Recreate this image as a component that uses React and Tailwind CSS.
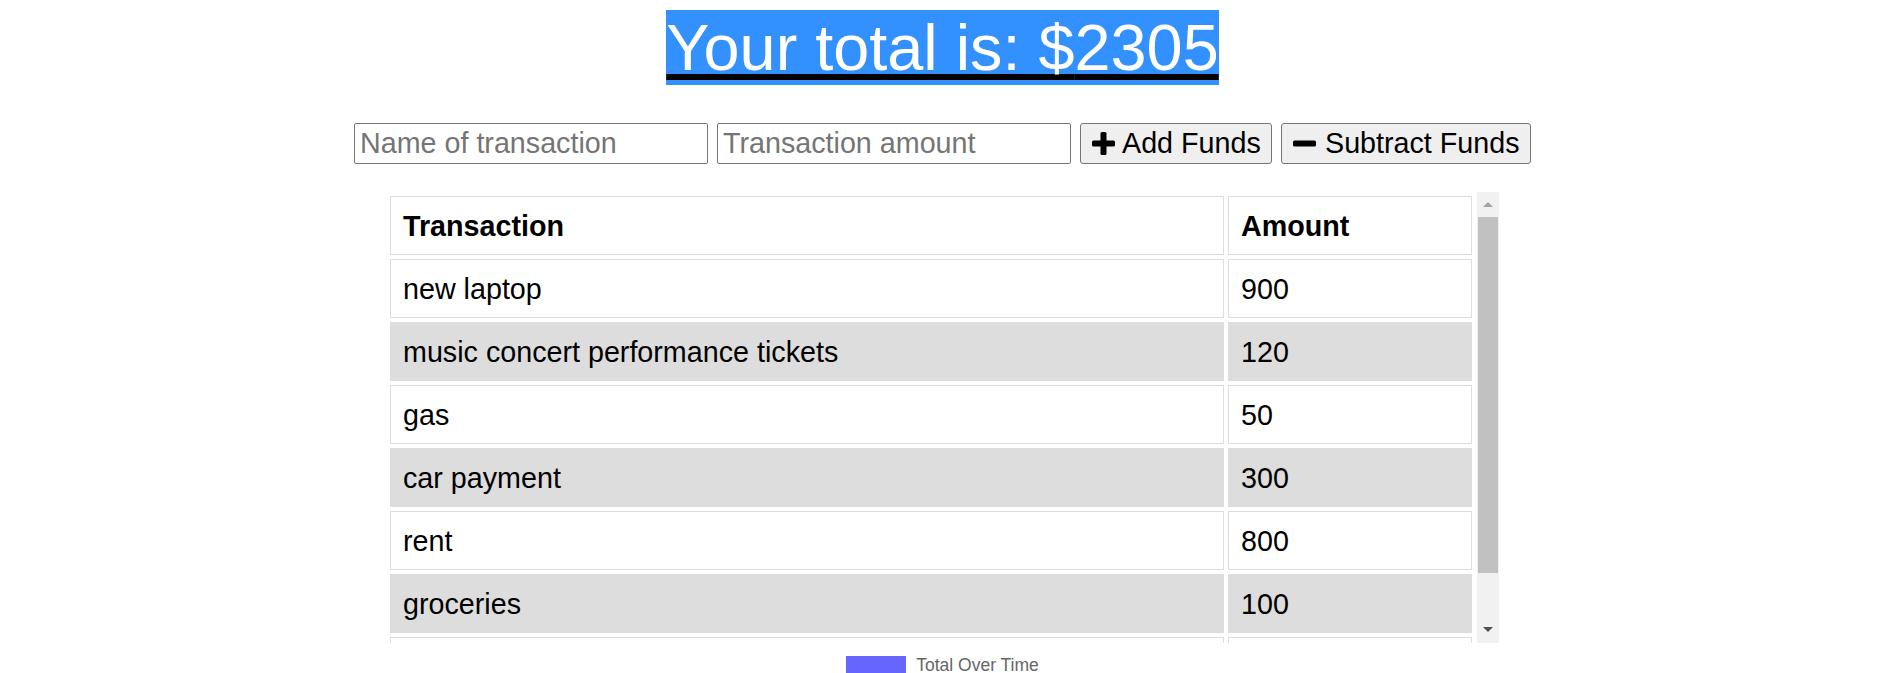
import { useMemo } from 'react';

const TRANSACTIONS = [
  { name: 'new laptop', amount: 900 },
  { name: 'music concert performance tickets', amount: 120 },
  { name: 'gas', amount: 50 },
  { name: 'car payment', amount: 300 },
  { name: 'rent', amount: 800 },
  { name: 'groceries', amount: 100 },
  { name: 'phone bill', amount: 35 },
];

function PlusIcon() {
  return (
    <svg width="23" height="23" viewBox="0 0 23 23" className="shrink-0">
      <rect x="8.5" y="0" width="6" height="23" rx="1.5" fill="#000" />
      <rect x="0" y="8.5" width="23" height="6" rx="1.5" fill="#000" />
    </svg>
  );
}

function MinusIcon() {
  return (
    <svg width="23" height="23" viewBox="0 0 23 23" className="shrink-0">
      <rect x="0" y="8.5" width="23" height="6" rx="1.5" fill="#000" />
    </svg>
  );
}

// fake scrollbar to match the reference's classic look
function Scrollbar() {
  return (
    <div className="w-[22px] h-full bg-[#f1f1f1] flex flex-col">
      <div className="h-[25px] flex items-center justify-center">
        <div className="w-0 h-0 border-x-[5.5px] border-x-transparent border-b-[5px] border-b-[#a3a3a3]" />
      </div>
      <div className="h-[356px] mx-[1px] bg-[#c1c1c1]" />
      <div className="flex-1" />
      <div className="h-[25px] flex items-center justify-center pb-[2px]">
        <div className="w-0 h-0 border-x-[5.5px] border-x-transparent border-t-[5px] border-t-[#505050]" />
      </div>
    </div>
  );
}

export default function App() {
  const total = useMemo(() => TRANSACTIONS.reduce((sum, t) => sum + t.amount, 0), []);

  return (
    <div className="h-[673px] overflow-hidden bg-white text-black font-['Liberation_Sans',Arial,sans-serif]">
      {/* Total */}
      <div className="flex justify-center pt-[10px]">
        <h1 className="text-[64.8px] font-normal leading-[75px]">
          <span className="inline-block bg-[#3390ff] text-white underline decoration-black decoration-[6px] underline-offset-[4px]">
            Your total is: ${total}
          </span>
        </h1>
      </div>

      {/* Form */}
      <div className="flex justify-center gap-[9px] mt-[38px]">
        <input
          type="text"
          placeholder="Name of transaction"
          className="w-[354px] h-[41px] border border-[#767676] rounded-[2px] px-[5px] text-[28.7px] placeholder:text-[#757575] outline-none"
        />
        <input
          type="number"
          placeholder="Transaction amount"
          className="w-[354px] h-[41px] border border-[#767676] rounded-[2px] px-[5px] text-[28.7px] placeholder:text-[#757575] outline-none"
        />
        <button className="w-[192px] h-[41px] flex items-center gap-[7px] pl-[11px] bg-[#efefef] border border-[#767676] rounded-[3px] text-[28.7px]">
          <PlusIcon />
          Add Funds
        </button>
        <button className="w-[250px] h-[41px] flex items-center gap-[9px] pl-[11px] bg-[#efefef] border border-[#767676] rounded-[3px] text-[28.7px]">
          <MinusIcon />
          Subtract Funds
        </button>
      </div>

      {/* Table */}
      <div className="flex justify-center mt-[28px]">
        <div className="flex h-[451px]">
          <div className="w-[1091px] overflow-hidden">
            <table className="table-fixed border-separate border-spacing-[4px] w-[1090px] text-[28.7px]">
              <colgroup>
                <col className="w-[834px]" />
                <col className="w-[244px]" />
              </colgroup>
              <thead>
                <tr>
                  <th className="text-left font-bold border border-[#dddddd] px-[12px] pt-[13px] pb-[11px] leading-[33px]">
                    Transaction
                  </th>
                  <th className="text-left font-bold border border-[#dddddd] px-[12px] pt-[13px] pb-[11px] leading-[33px]">
                    Amount
                  </th>
                </tr>
              </thead>
              <tbody>
                {TRANSACTIONS.map((t, i) => (
                  <tr key={t.name} className={i % 2 === 1 ? 'bg-[#dddddd]' : 'bg-white'}>
                    <td className="border border-[#dddddd] px-[12px] pt-[13px] pb-[11px] leading-[33px]">{t.name}</td>
                    <td className="border border-[#dddddd] px-[12px] pt-[13px] pb-[11px] leading-[33px]">{t.amount}</td>
                  </tr>
                ))}
              </tbody>
            </table>
          </div>
          <Scrollbar />
        </div>
      </div>

      {/* Chart legend */}
      <div className="flex justify-center items-start gap-[10px] mt-[13px]">
        <span className="w-[60px] h-[18px] bg-[#6666ff]" />
        <span className="text-[17.5px] leading-none text-[#666666] mt-[1px]">Total Over Time</span>
      </div>
    </div>
  );
}
